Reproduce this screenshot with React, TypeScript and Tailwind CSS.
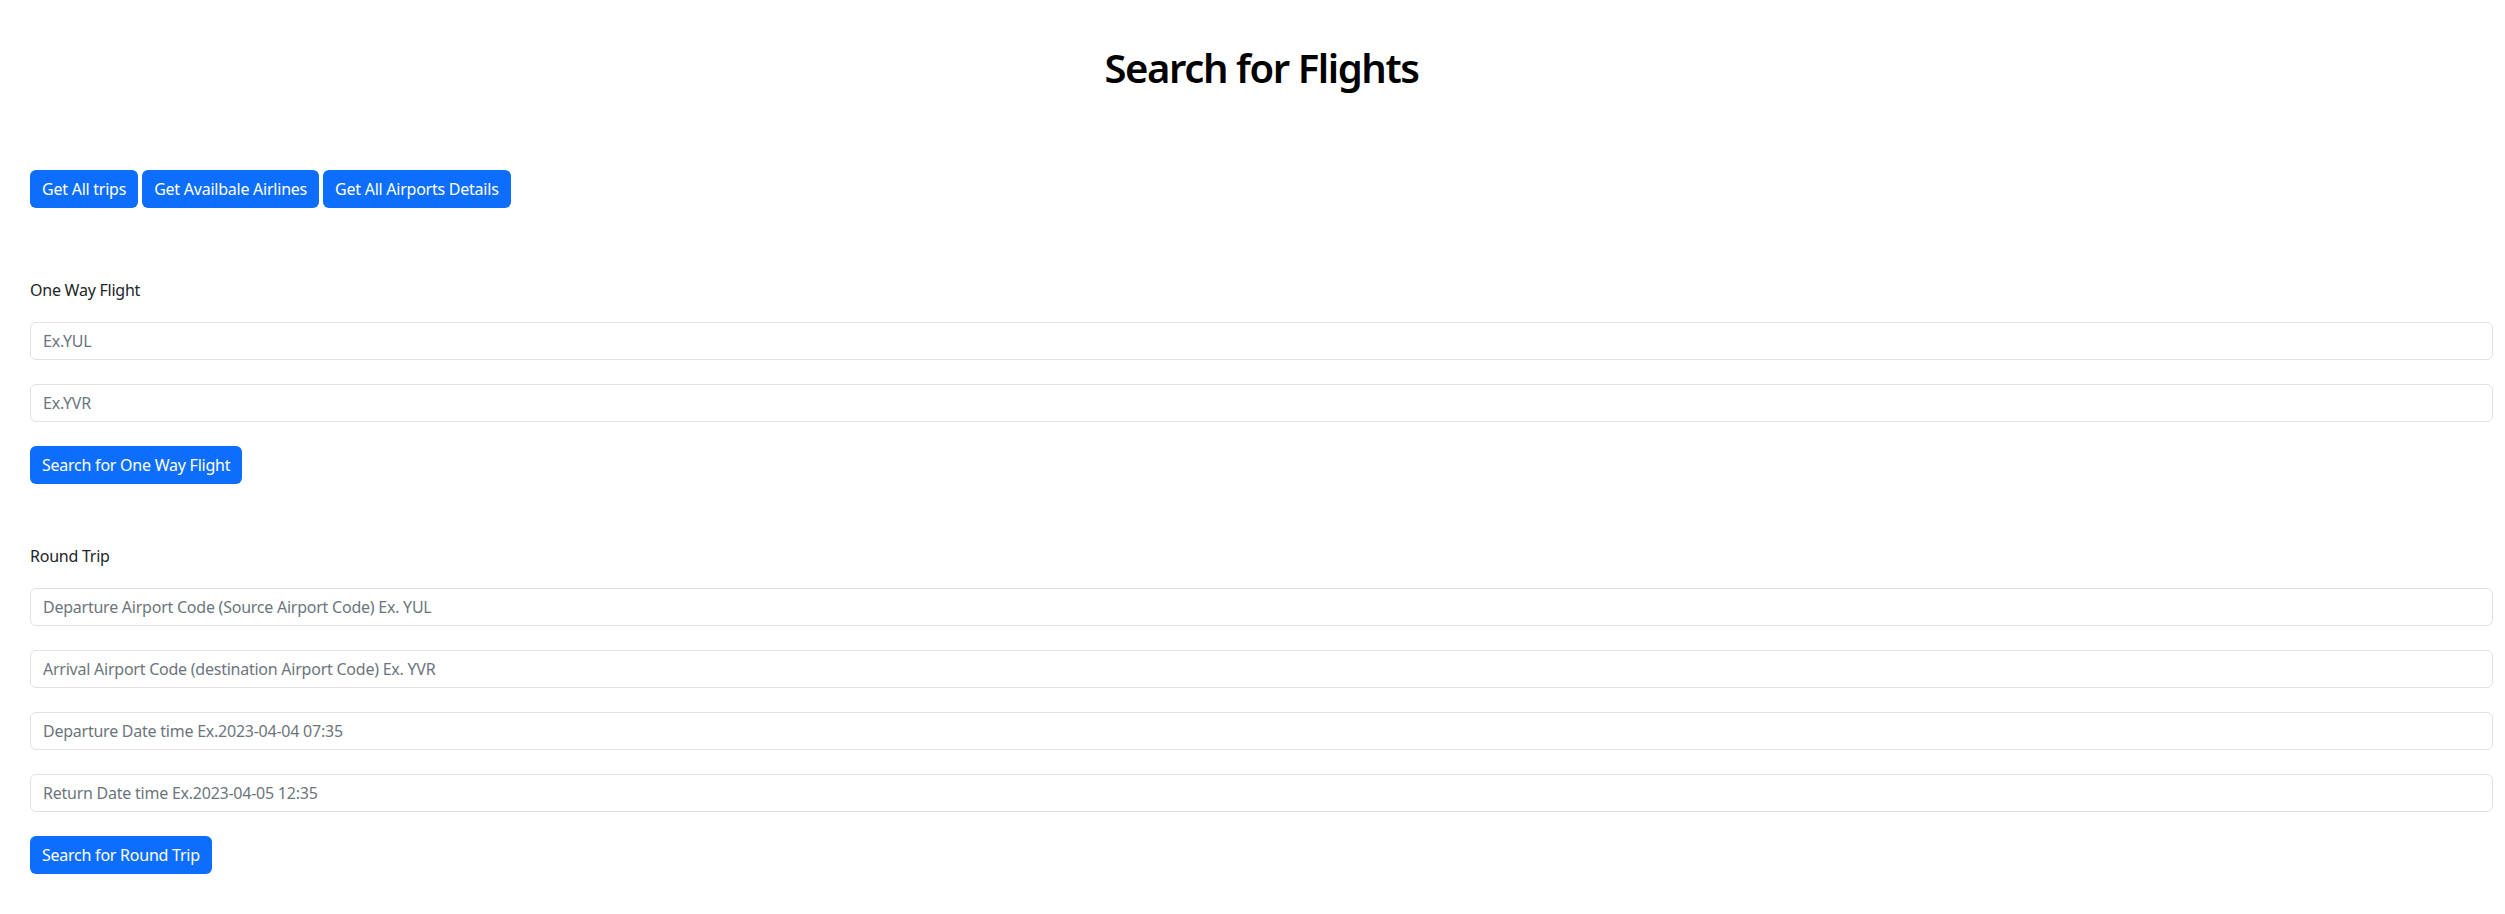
import React from 'react';

const btn =
  'inline-flex h-[38px] items-center rounded-md bg-[#0d6efd] px-3 text-base leading-6 tracking-[-0.015em] text-white hover:bg-[#0b5ed7]';

const field =
  'block h-[38px] w-full rounded-md border border-[#dee2e6] bg-white px-3 text-base leading-6 tracking-[-0.015em] text-[#212529] placeholder:text-[#6c757d] outline-none focus:border-[#86b7fe]';

const App: React.FC = () => {
  return (
    <div className="min-h-screen bg-white pl-[30px] pr-[12px] font-['Segoe_UI','Noto_Sans',sans-serif] text-[#212529]">
      <h1 className="pt-[44px] text-center text-[40px] font-semibold leading-[48px] tracking-[-0.035em] text-black">
        Search for Flights
      </h1>

      {/* top actions */}
      <div className="mt-[78px] flex gap-1">
        <button className={btn}>Get All trips</button>
        <button className={btn}>Get Availbale Airlines</button>
        <button className={btn}>Get All Airports Details</button>
      </div>

      {/* one way */}
      <section className="mt-[70px]">
        <label className="block text-base leading-6 tracking-[-0.015em]">One Way Flight</label>
        <input className={`mt-5 ${field}`} placeholder="Ex.YUL" />
        <input className={`mt-6 ${field}`} placeholder="Ex.YVR" />
        <button className={`mt-6 ${btn}`}>Search for One Way Flight</button>
      </section>

      {/* round trip */}
      <section className="mt-[60px] pb-10">
        <label className="block text-base leading-6 tracking-[-0.015em]">Round Trip</label>
        <input className={`mt-5 ${field}`} placeholder="Departure Airport Code (Source Airport Code) Ex. YUL" />
        <input className={`mt-6 ${field}`} placeholder="Arrival Airport Code (destination Airport Code) Ex. YVR" />
        <input className={`mt-6 ${field}`} placeholder="Departure Date time Ex.2023-04-04 07:35" />
        <input className={`mt-6 ${field}`} placeholder="Return Date time Ex.2023-04-05 12:35" />
        <button className={`mt-6 ${btn}`}>Search for Round Trip</button>
      </section>
    </div>
  );
};

export default App;
